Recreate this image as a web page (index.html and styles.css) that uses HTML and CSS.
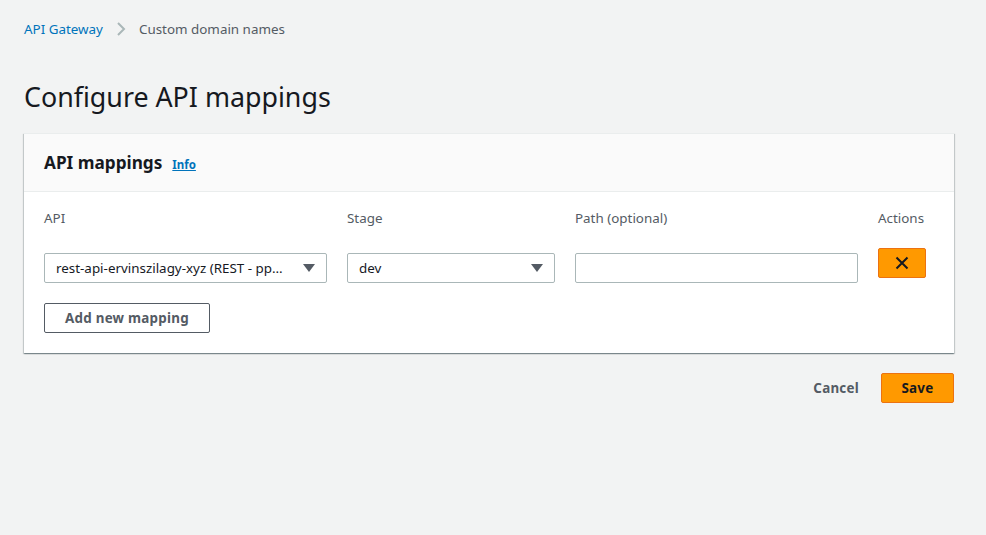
FILE: index.html
```html
<!DOCTYPE html>
<html>
<head>
<meta charset="utf-8">
<link rel="stylesheet" href="styles.css">
</head>
<body>
<nav class="breadcrumbs">
  <a class="crumb-link" href="#">API Gateway</a>
  <svg class="crumb-sep" width="12" height="16" viewBox="0 0 12 16"><path d="M3 2 L9 8 L3 14" fill="none" stroke="#aab7b8" stroke-width="2"/></svg>
  <span class="crumb-current">Custom domain names</span>
</nav>
<h1 class="page-title">Configure API mappings</h1>
<section class="container">
  <header class="container-header">
    <h2 class="container-title">API mappings</h2>
    <a class="info-link" href="#">Info</a>
  </header>
  <div class="container-body">
    <div class="grid">
      <div class="label col-api">API</div>
      <div class="label col-stage">Stage</div>
      <div class="label col-path">Path (optional)</div>
      <div class="label col-actions">Actions</div>
      <div class="select col-api"><span class="select-text">rest-api-ervinszilagy-xyz (REST - pp…</span><span class="caret"></span></div>
      <div class="select col-stage"><span class="select-text">dev</span><span class="caret"></span></div>
      <div class="input col-path"></div>
      <div class="col-actions">
        <button class="remove-btn" aria-label="Remove">
          <svg width="16" height="16" viewBox="0 0 16 16"><path d="M2.5 2.5 L13.5 13.5 M13.5 2.5 L2.5 13.5" stroke="#16191f" stroke-width="2" fill="none"/></svg>
        </button>
      </div>
    </div>
    <button class="btn-normal">Add new mapping</button>
  </div>
</section>
<div class="actions">
  <button class="btn-link">Cancel</button>
  <button class="btn-primary">Save</button>
</div>
</body>
</html>
```
FILE: styles.css
```css
* { box-sizing: border-box; }
html, body { margin: 0; padding: 0; }
body {
  background: #f2f3f3;
  font-family: "Noto Sans", "Open Sans", sans-serif;
  font-size: 13.4px;
  color: #16191f;
  padding: 0 32px 0 24px;
}
.breadcrumbs {
  display: flex;
  align-items: center;
  height: 56px;
  padding-top: 1px;
}
.crumb-link { color: #0073bb; text-decoration: none; }
.crumb-sep { margin: 0 12px 0 12px; }
.crumb-current { color: #545b64; }
.page-title {
  margin: 23px 0 18px;
  font-size: 26.8px;
  font-weight: 400;
  line-height: 36px;
  color: #16191f;
}
.container {
  background: #fff;
  box-shadow: 0 1px 1px 0 rgba(0,28,36,.3), 1px 1px 1px 0 rgba(0,28,36,.15), -1px 1px 1px 0 rgba(0,28,36,.15);
  border-top: 1px solid #eaeded;
}
.container-header {
  background: #fafafa;
  border-bottom: 1px solid #eaeded;
  height: 58px;
  display: flex;
  align-items: center;
  padding: 0 20px;
}
.container-title {
  margin: 0;
  font-size: 17.2px;
  font-weight: 700;
  color: #16191f;
}
.info-link {
  margin-left: 10px;
  margin-top: 4px;
  font-size: 11.5px;
  font-weight: 700;
  color: #0073bb;
  text-decoration: underline;
}
.container-body { padding: 15px 20px 20px; }
.grid {
  display: grid;
  grid-template-columns: 283px 208px 283px 48px;
  column-gap: 20px;
  row-gap: 19px;
  align-items: start;
}
.label { color: #545b64; line-height: 22px; }
.col-actions { justify-self: start; }
.select, .input {
  height: 30px;
  border: 1px solid #aab7b8;
  border-radius: 2px;
  background: #fff;
  margin-top: 5px;
}
.select {
  display: flex;
  align-items: center;
  padding: 0 10px 0 11px;
}
.select-text {
  flex: 1;
  min-width: 0;
  white-space: nowrap;
  color: #16191f;
}
.caret {
  margin-left: 8px;
  width: 0; height: 0;
  border-left: 6px solid transparent;
  border-right: 6px solid transparent;
  border-top: 8px solid #545b64;
  margin-right: 1px;
}
.remove-btn {
  width: 48px;
  height: 30px;
  background: #ff9900;
  border: 1px solid #ec7211;
  border-radius: 2px;
  display: flex;
  align-items: center;
  justify-content: center;
  padding: 0;
}
.btn-normal {
  margin-top: 20px;
  height: 30px;
  width: 166px;
  padding: 0;
  background: #fff;
  border: 1px solid #545b64;
  border-radius: 2px;
  font-family: inherit;
  font-size: 13.4px;
  font-weight: 700;
  color: #545b64;
  letter-spacing: 0.25px;
}
.actions {
  display: flex;
  justify-content: flex-end;
  align-items: center;
  margin-top: 20px;
  gap: 6px;
}
.btn-link, .btn-primary {
  height: 30px;
  font-family: inherit;
  font-size: 13.4px;
  font-weight: 700;
  letter-spacing: 0.25px;
  border-radius: 2px;
}
.btn-link { background: none; border: none; color: #545b64; padding: 0 16px 0 20px; }
.btn-primary {
  background: #ff9900;
  border: 1px solid #ec7211;
  color: #16191f;
  padding: 0;
  width: 73px;
}
```
